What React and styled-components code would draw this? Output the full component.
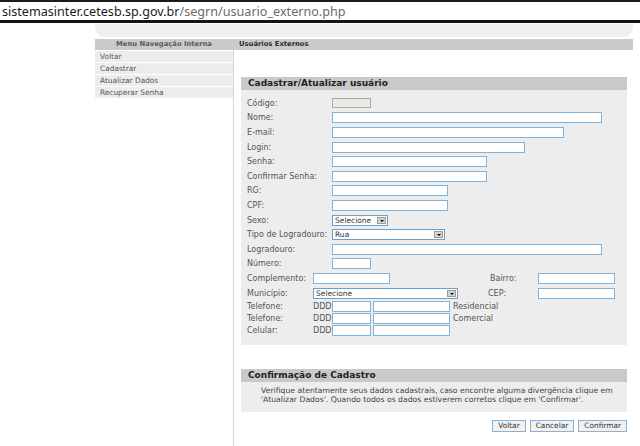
import React from "react";
import styled, { createGlobalStyle } from "styled-components";

const Global = createGlobalStyle`
  html, body { margin: 0; padding: 0; background: #fff; }
  body {
    width: 640px; height: 446px; overflow: hidden;
    font-family: "DejaVu Sans", Verdana, sans-serif;
    color: #555;
  }
  * { box-sizing: border-box; }
`;

const AddressBar = styled.div`
  height: 23px;
  border-top: 2px solid #1c1c1c;
  border-bottom: 3px solid #141414;
  display: flex;
  align-items: center;
  padding-left: 2px;
  font-family: "Noto Sans", "Open Sans", sans-serif;
  font-size: 12.6px;
  color: #1a1a1a;
  white-space: nowrap;
`;

const UrlPath = styled.span`
  color: #6b6b6b;
`;

const Shell = styled.div`
  margin-left: 95px;
  width: 538px;
`;

const TopCap = styled.div`
  margin-top: 1px;
  height: 13px;
  background: #efefef;
  border-radius: 0 0 10px 10px;
  margin-bottom: 2px;
`;

const Columns = styled.div`
  display: grid;
  grid-template-columns: 138px 1fr;
`;

const SideMenu = styled.nav`
  display: flex;
  flex-direction: column;
  gap: 1px;
`;

const BarTitle = styled.div`
  height: 11px;
  line-height: 11px;
  background: #cacaca;
  font-size: 6.8px;
  font-weight: bold;
  color: ${(p) => (p.$dark ? "#2a2a2a" : "#5a5a5a")};
  text-align: ${(p) => (p.$center ? "center" : "left")};
  padding-left: ${(p) => (p.$center ? "0" : "6px")};
`;

const MenuItem = styled.div`
  height: 11px;
  line-height: 11px;
  background: #ececec;
  font-size: 7.4px;
  color: #555;
  padding-left: 5px;
`;

const Main = styled.div`
  display: flex;
  flex-direction: column;
`;

const Content = styled.div`
  border-left: 1px solid #d6d6d6;
  height: 396px;
  padding: 0 6px 0 7px;
  display: flex;
  flex-direction: column;
`;

const Panel = styled.section`
  margin-top: ${(p) => p.$top}px;
  background: #ededed;
`;

const PanelHead = styled.h2`
  margin: 0;
  height: 13px;
  line-height: 13px;
  background: #c9c9c9;
  font-size: 9px;
  font-weight: bold;
  color: #222;
  padding-left: 7px;
`;

const FormBody = styled.div`
  padding: 6px 0 9px 0;
  display: flex;
  flex-direction: column;
`;

const Row = styled.div`
  height: ${(p) => p.$h}px;
  display: flex;
  align-items: center;
`;

const Label = styled.span`
  width: ${(p) => p.$w}px;
  flex: none;
  padding-left: 6px;
  font-size: 8px;
  color: #555;
  white-space: nowrap;
`;

const SideLabel = styled.span`
  width: ${(p) => p.$w}px;
  margin-left: ${(p) => p.$ml}px;
  flex: none;
  font-size: 8px;
  color: #555;
  white-space: nowrap;
`;

const Note = styled.span`
  margin-left: ${(p) => p.$ml || 0}px;
  width: ${(p) => (p.$w ? p.$w + "px" : "auto")};
  flex: none;
  font-size: 8px;
  color: #555;
`;

const Field = styled.input`
  width: ${(p) => p.$w}px;
  height: ${(p) => p.$h || 11}px;
  margin: 0 0 0 ${(p) => p.$ml || 0}px;
  padding: 0 2px;
  border: 1px solid ${(p) => (p.$disabled ? "#a9a9a9" : "#80b3d9")};
  background: ${(p) => (p.$disabled ? "#ebe9e3" : "#fff")};
  font-size: 7.5px;
  outline: none;
  flex: none;
`;

const SelectBox = styled.div`
  width: ${(p) => p.$w}px;
  height: 11px;
  border: 1px solid #6e9fc9;
  background: #fff;
  display: flex;
  align-items: center;
  justify-content: space-between;
  padding: 0 1px 0 2px;
  font-size: 7.5px;
  color: #333;
  flex: none;
`;

const Arrow = styled.span`
  width: 9px;
  height: 7px;
  background: #d6d3cc;
  border: 1px solid #9a9a9a;
  display: flex;
  align-items: center;
  justify-content: center;
  &::after {
    content: "";
    border-left: 2px solid transparent;
    border-right: 2px solid transparent;
    border-top: 2px solid #000;
    margin-top: 1px;
  }
`;

const InfoBody = styled.div`
  padding: 4px 12px 8px 20px;
  font-size: 7.7px;
  line-height: 9px;
  color: #444;
  white-space: nowrap;
`;

const Actions = styled.div`
  margin-top: 8px;
  display: flex;
  justify-content: flex-end;
  gap: 4px;
`;

const Button = styled.button`
  height: 12px;
  padding: 0 5px;
  margin: 0;
  border: 1px solid #8db3d3;
  background: #f1f1f1;
  font-family: "DejaVu Sans", Verdana, sans-serif;
  font-size: 7.4px;
  color: #333;
  line-height: 10px;
`;

const Select = ({ w, value }) => (
  <SelectBox $w={w}>
    <span>{value}</span>
    <Arrow />
  </SelectBox>
);

const basicRows = [
  { label: "Nome:", w: 270 },
  { label: "E-mail:", w: 232 },
  { label: "Login:", w: 193 },
  { label: "Senha:", w: 155 },
  { label: "Confirmar Senha:", w: 155 },
  { label: "RG:", w: 116 },
  { label: "CPF:", w: 116 },
];

const phones = ["Residencial", "Comercial", ""];
const phoneLabels = ["Telefone:", "Telefone:", "Celular:"];

const LW = 91;
const LW2 = 72;

export default function App() {
  return (
    <>
      <Global />
      <AddressBar>
        sistemasinter.cetesb.sp.gov.br<UrlPath>/segrn/usuario_externo.php</UrlPath>
      </AddressBar>
      <Shell>
        <TopCap />
        <Columns>
          <SideMenu>
            <BarTitle $center>Menu Navegação Interna</BarTitle>
            <MenuItem>Voltar</MenuItem>
            <MenuItem>Cadastrar</MenuItem>
            <MenuItem>Atualizar Dados</MenuItem>
            <MenuItem>Recuperar Senha</MenuItem>
          </SideMenu>
          <Main>
            <BarTitle $dark>Usuários Externos</BarTitle>
            <Content>
              <Panel $top={27}>
                <PanelHead>Cadastrar/Atualizar usuário</PanelHead>
                <FormBody>
                  <Row $h={14.6}>
                    <Label $w={LW}>Código:</Label>
                    <Field $w={39} $h={10} $disabled readOnly />
                  </Row>
                  {basicRows.map((r) => (
                    <Row $h={14.6} key={r.label}>
                      <Label $w={LW}>{r.label}</Label>
                      <Field $w={r.w} />
                    </Row>
                  ))}
                  <Row $h={14.6}>
                    <Label $w={LW}>Sexo:</Label>
                    <Select w={56} value="Selecione" />
                  </Row>
                  <Row $h={14.6}>
                    <Label $w={LW}>Tipo de Logradouro:</Label>
                    <Select w={113} value="Rua" />
                  </Row>
                  <Row $h={14.6}>
                    <Label $w={LW}>Logradouro:</Label>
                    <Field $w={270} />
                  </Row>
                  <Row $h={14.6}>
                    <Label $w={LW}>Número:</Label>
                    <Field $w={39} />
                  </Row>
                  <Row $h={14.6}>
                    <Label $w={LW2}>Complemento:</Label>
                    <Field $w={77} />
                    <SideLabel $w={48} $ml={100}>Bairro:</SideLabel>
                    <Field $w={77} />
                  </Row>
                  <Row $h={14.6}>
                    <Label $w={LW2}>Município:</Label>
                    <Select w={145} value="Selecione" />
                    <SideLabel $w={50} $ml={30}>CEP:</SideLabel>
                    <Field $w={77} />
                  </Row>
                  {phones.map((kind, i) => (
                    <Row $h={12} key={i}>
                      <Label $w={LW2}>{phoneLabels[i]}</Label>
                      <Note $w={19}>DDD</Note>
                      <Field $w={39} $h={11} />
                      <Field $w={77} $h={11} $ml={2} />
                      {kind && <Note $ml={3}>{kind}</Note>}
                    </Row>
                  ))}
                </FormBody>
              </Panel>
              <Panel $top={24}>
                <PanelHead>Confirmação de Cadastro</PanelHead>
                <InfoBody>
                  Verifique atentamente seus dados cadastrais, caso encontre alguma divergência clique em
                  <br />
                  'Atualizar Dados'. Quando todos os dados estiverem corretos clique em 'Confirmar'.
                </InfoBody>
              </Panel>
              <Actions>
                <Button>Voltar</Button>
                <Button>Cancelar</Button>
                <Button>Confirmar</Button>
              </Actions>
            </Content>
          </Main>
        </Columns>
      </Shell>
    </>
  );
}
